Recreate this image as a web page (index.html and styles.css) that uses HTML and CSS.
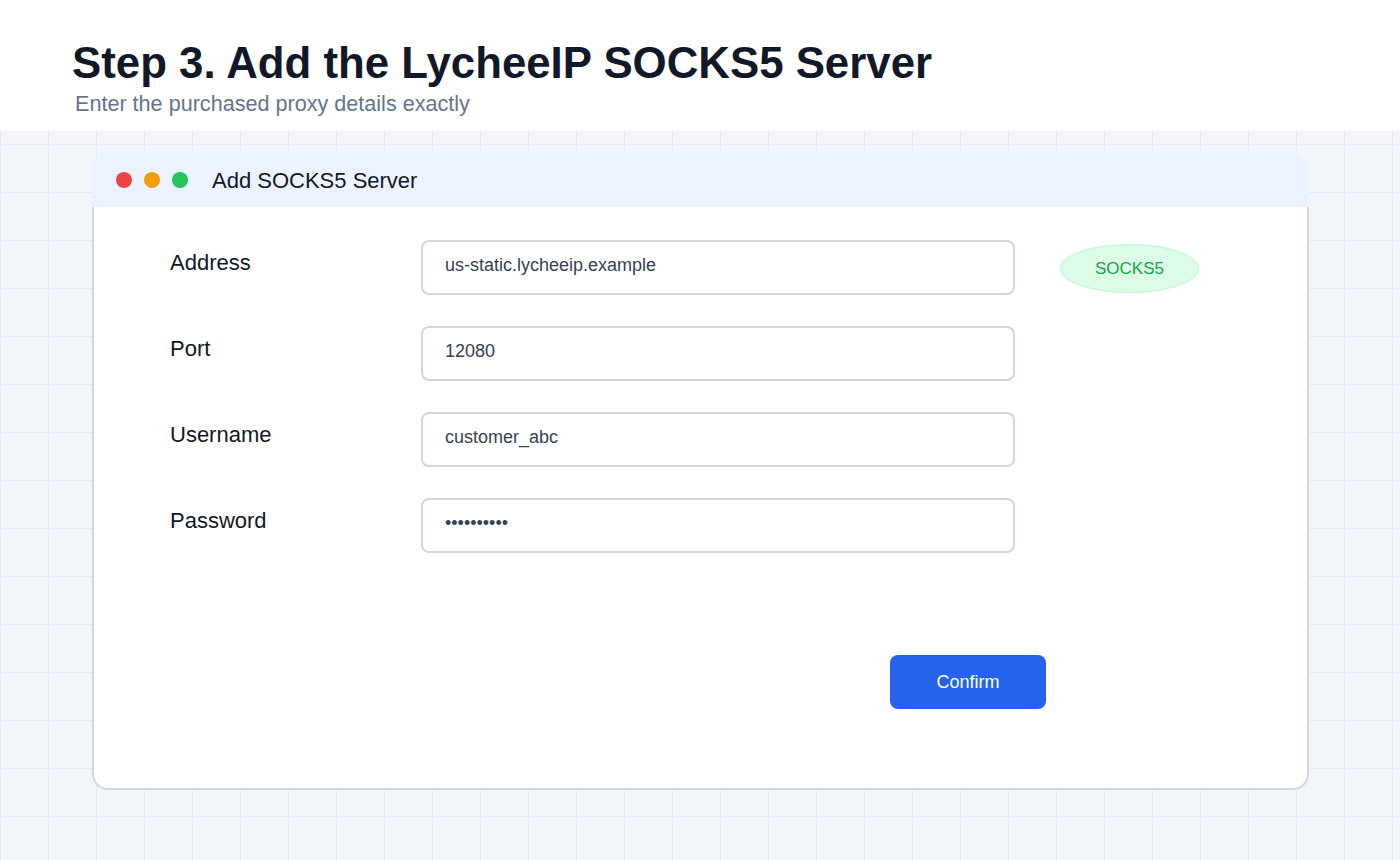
FILE: index.html
```html
<!DOCTYPE html>
<html lang="en">
<head>
    <meta charset="UTF-8">
    <meta content="width=device-width, initial-scale=1.0" name="viewport">
    <title>Step 3 - Add SOCKS5 Server</title>
    <link rel="stylesheet" href="styles.css">
</head>
<body>

<div class="page-header">
    <h1 class="title">Step 3. Add the LycheeIP SOCKS5 Server</h1>
    <div class="subtitle">Enter the purchased proxy details exactly</div>
</div>

<div class="stage">
    <div class="window">
        <div class="window-bar">
            <span class="dot dot-red"></span>
            <span class="dot dot-yellow"></span>
            <span class="dot dot-green"></span>
            <span class="window-title">Add SOCKS5 Server</span>
        </div>

        <div class="window-body">
            <div class="form">
                <label class="form-label">Address</label>
                <div class="field">us-static.lycheeip.example</div>
                <div class="badge">SOCKS5</div>

                <label class="form-label">Port</label>
                <div class="field">12080</div>
                <div></div>

                <label class="form-label">Username</label>
                <div class="field">customer_abc</div>
                <div></div>

                <label class="form-label">Password</label>
                <div class="field">&bull;&bull;&bull;&bull;&bull;&bull;&bull;&bull;&bull;&bull;</div>
                <div></div>
            </div>

            <div class="actions">
                <button class="confirm-button">Confirm</button>
            </div>
        </div>
    </div>
</div>

</body>
</html>
```

FILE: styles.css
```css
body {
    font-family: "Liberation Sans", Arial, sans-serif;
    margin: 0;
    min-height: 860px;
    background-color: #f2f6fb;
    background-image:
        linear-gradient(to right, #e4eaf6 1px, transparent 1px),
        linear-gradient(to bottom, #e4eaf6 1px, transparent 1px);
    background-size: 48px 48px;
    background-position: 0 0;
}

.page-header {
    background: #ffffff;
    height: 131px;
    box-sizing: border-box;
    padding: 41px 0 0 72px;
}

.title {
    margin: 0;
    font-size: 43.8px;
    line-height: 44px;
    font-weight: bold;
    color: #111827;
}

.subtitle {
    margin: 8px 0 0 3px;
    font-size: 21.6px;
    line-height: 22px;
    color: #64748b;
}

.stage {
    padding: 22px 0 0 92px;
}

.window {
    width: 1217px;
}

.window-bar {
    height: 54px;
    background: #ecf2fe;
    border-radius: 16px 16px 0 0;
    display: flex;
    align-items: center;
    padding-left: 24px;
}

.dot {
    width: 16px;
    height: 16px;
    border-radius: 50%;
    margin-right: 12px;
}

.dot-red {
    background: #ef4444;
}

.dot-yellow {
    background: #f59e0b;
}

.dot-green {
    background: #22c55e;
    margin-right: 24px;
}

.window-title {
    font-size: 22px;
    color: #111827;
    padding-top: 2px;
}

.window-body {
    background: #ffffff;
    border: 2px solid #d1d6e0;
    border-top: none;
    border-radius: 0 0 16px 16px;
    padding: 33px 0 79px 76px;
}

.form {
    display: grid;
    grid-template-columns: 251px 594px 139px;
    column-gap: 0;
    row-gap: 31px;
}

.form-label {
    font-size: 22px;
    line-height: 22px;
    color: #111827;
    padding-top: 12px;
}

.field {
    height: 55px;
    box-sizing: border-box;
    border: 2px solid #d1d5dd;
    border-radius: 8px;
    padding: 14px 20px 0 22px;
    font-size: 18px;
    line-height: 18px;
    color: #334155;
}

.badge {
    margin: 4px 0 0 45px;
    width: 139px;
    height: 49px;
    box-sizing: border-box;
    border: 1px solid #bbf7d0;
    border-radius: 50%;
    background: #dcfce7;
    color: #16a34a;
    font-size: 17px;
    display: flex;
    align-items: center;
    justify-content: center;
}

.actions {
    margin-top: 102px;
    padding-left: 720px;
}

.confirm-button {
    width: 156px;
    height: 54px;
    border: none;
    border-radius: 8px;
    background: #2563eb;
    color: #ffffff;
    font-family: "Liberation Sans", Arial, sans-serif;
    font-size: 18px;
    cursor: pointer;
}
```
